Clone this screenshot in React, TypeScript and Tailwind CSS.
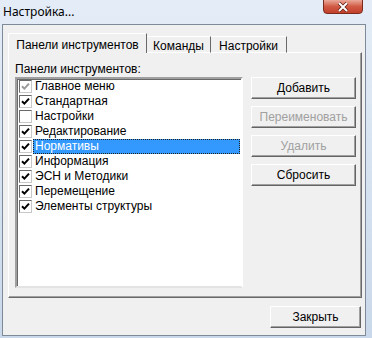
import React from 'react';

const items = [
    { label: 'Главное меню', checked: true, disabled: true },
    { label: 'Стандартная', checked: true },
    { label: 'Настройки', checked: false },
    { label: 'Редактирование', checked: true },
    { label: 'Нормативы', checked: true, selected: true },
    { label: 'Информация', checked: true },
    { label: 'ЭСН и Методики', checked: true },
    { label: 'Перемещение', checked: true },
    { label: 'Элементы структуры', checked: true },
];

const CheckBox: React.FC<{ checked: boolean; disabled?: boolean }> = ({ checked, disabled }) => (
    <div className="w-[13px] h-[13px] shrink-0 border border-t-[#6a6a6a] border-l-[#6a6a6a] border-r-[#c8c8c8] border-b-[#c8c8c8] bg-white flex items-center justify-center">
        {checked && (
            <svg width="9" height="9" viewBox="0 0 9 9">
                <path
                    d="M1 4.2 L3.4 6.6 L8 1.6"
                    fill="none"
                    stroke={disabled ? '#9a9a9a' : '#000'}
                    strokeWidth="2"
                />
            </svg>
        )}
    </div>
);

const WinButton: React.FC<{ label: string; disabled?: boolean; className?: string }> = ({ label, disabled, className }) => (
    <div
        className={
            'h-[22px] bg-[#f0f0f0] border border-t-white border-l-white border-r-[#646464] border-b-[#646464] shadow-[inset_-1px_-1px_0_#a0a0a0] flex items-center justify-center text-[12px] ' +
            (disabled ? 'text-[#a0a0a0]' : 'text-black') +
            ' ' +
            (className || '')
        }
    >
        {label}
    </div>
);

export default function App() {
    return (
        <div
            className="w-[372px] h-[338px] bg-gradient-to-b from-[#e4edf7] to-[#c9d8ea] flex flex-col overflow-hidden"
            style={{ fontFamily: '"Liberation Sans", Arial, sans-serif' }}
        >
            {/* заголовок окна */}
            <div className="h-[24px] flex items-start justify-between pl-[3px] pr-[9px]">
                <span className="text-[12px] text-black pt-[5px] leading-[14px]" style={{ fontFamily: '"Noto Sans", sans-serif' }}>
                    Настройка...
                </span>
                <div className="w-[40px] h-[15px] -mt-[1px] rounded-b-[4px] border border-[#7c2a1c] bg-gradient-to-b from-[#e9a99a] via-[#d15a45] to-[#c2402a] flex items-center justify-center">
                    <svg width="12" height="10" viewBox="0 0 12 10">
                        <path d="M2 1 L10 9 M10 1 L2 9" stroke="#5a1a10" strokeWidth="3.4" />
                        <path d="M2 1 L10 9 M10 1 L2 9" stroke="#fff" strokeWidth="2" />
                    </svg>
                </div>
            </div>

            {/* клиентская область */}
            <div className="ml-[2px] mr-[6px] h-[312px] border border-[#7d8a99] bg-[#f0f0f0] flex flex-col pl-[5px] pr-[2px] pt-[8px] text-[12px] text-black">
                {/* вкладки */}
                <div className="flex items-end h-[20px] relative z-10">
                    <div className="w-[139px] h-[20px] bg-[#f0f0f0] border-t border-l border-white border-r border-r-[#696969] flex items-start justify-center pt-[4px] leading-[14px]">
                        Панели инструментов
                    </div>
                    <div className="w-[64px] h-[17px] border-t border-r border-white border-r-[#696969] border-b border-b-white flex items-start justify-center pt-[2px] leading-[14px]">
                        Команды
                    </div>
                    <div className="w-[76px] h-[17px] border-t border-r border-white border-r-[#696969] border-b border-b-white flex items-start justify-center pt-[2px] leading-[14px]">
                        Настройки
                    </div>
                </div>

                {/* страница вкладки */}
                <div className="w-[354px] h-[246px] -mt-[1px] border border-t-white border-l-white border-r-[#696969] border-b-[#696969] shadow-[inset_-1px_-1px_0_#a0a0a0] flex pl-[6px] pt-[9px]">
                    <div className="flex flex-col">
                        <div className="leading-[14px] h-[14px]">Панели инструментов:</div>
                        <div className="mt-[1px] w-[228px] h-[211px] bg-white border-2 border-t-[#a0a0a0] border-l-[#a0a0a0] border-r-white border-b-[#e3e3e3] shadow-[inset_1px_1px_0_#696969] pl-[2px] pr-[1px]">
                            {items.map((it) => (
                                <div key={it.label} className="h-[15px] flex items-center">
                                    <CheckBox checked={it.checked} disabled={it.disabled} />
                                    <div
                                        className={
                                            'ml-[1px] flex-1 h-[15px] pl-[2px] leading-[15px] ' +
                                            (it.selected
                                                ? 'bg-[#3399ff] text-white outline outline-1 outline-dotted outline-[#222] -outline-offset-1'
                                                : '')
                                        }
                                    >
                                        {it.label}
                                    </div>
                                </div>
                            ))}
                        </div>
                    </div>
                    <div className="ml-[8px] pt-[15px] flex flex-col gap-[7px] w-[105px]">
                        <WinButton label="Добавить" />
                        <WinButton label="Переименовать" disabled />
                        <WinButton label="Удалить" disabled />
                        <WinButton label="Сбросить" />
                    </div>
                </div>

                {/* нижняя кнопка */}
                <div className="flex justify-end mt-[8px] pr-[2px]">
                    <WinButton label="Закрыть" className="w-[91px]" />
                </div>
            </div>
        </div>
    );
}
